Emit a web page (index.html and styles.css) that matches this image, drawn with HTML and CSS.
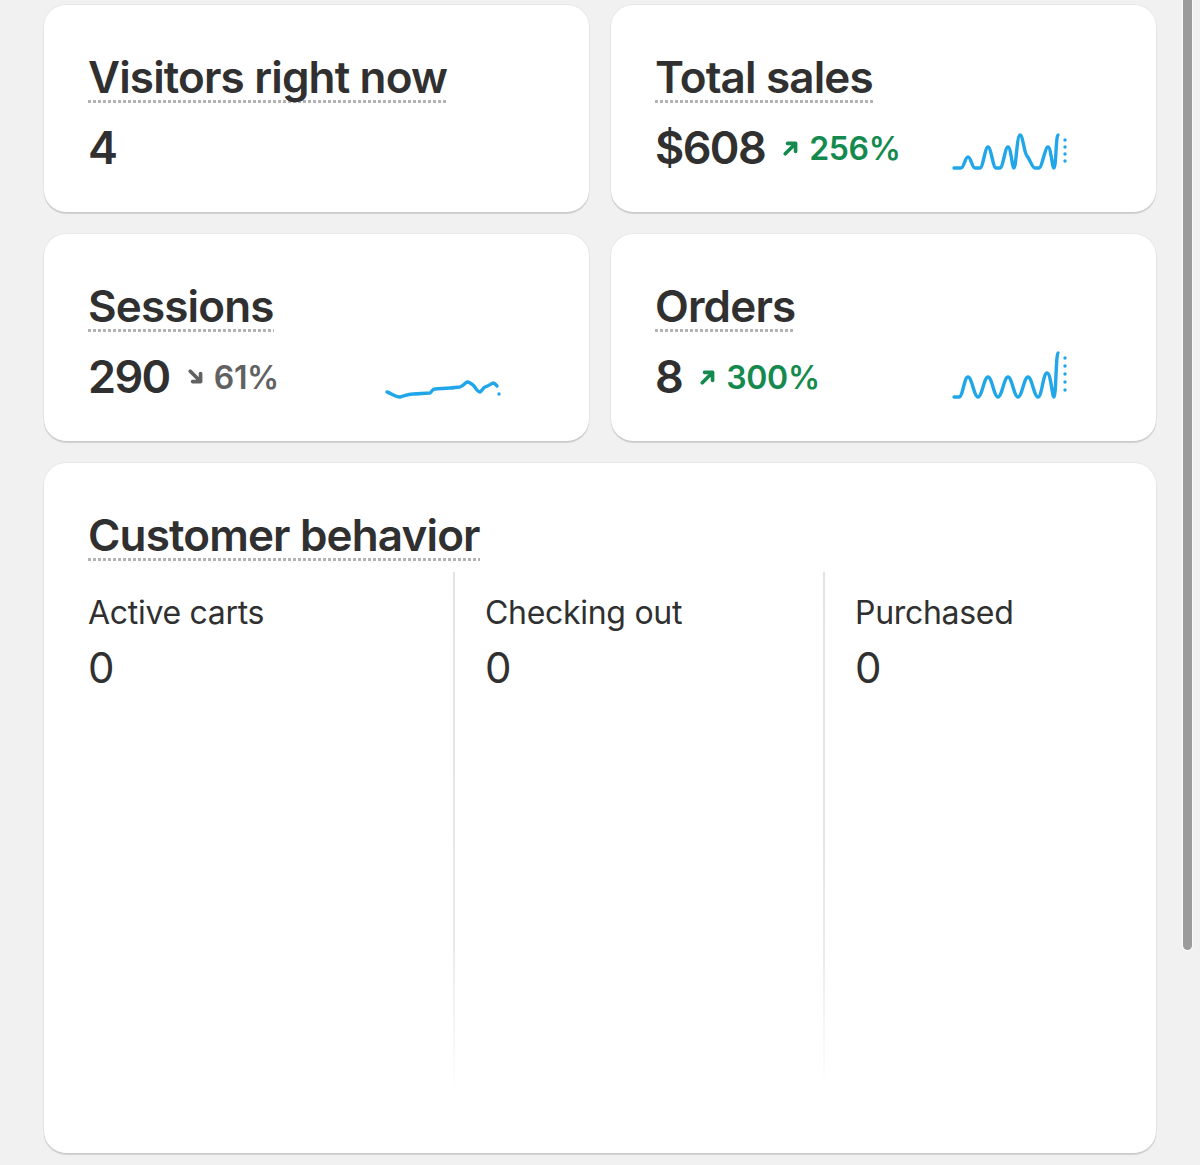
FILE: index.html
```html
<!DOCTYPE html>
<html lang="en">
<head>
<meta charset="utf-8">
<title>Live view</title>
<link rel="stylesheet" href="styles.css">
</head>
<body>
<main class="page">
  <section class="metric-grid">
    <article class="card metric">
      <h2 class="metric-title"><span class="dotted">Visitors right now</span></h2>
      <div class="metric-row">
        <div class="metric-value"><span class="value">4</span></div>
      </div>
    </article>

    <article class="card metric">
      <h2 class="metric-title"><span class="dotted">Total sales</span></h2>
      <div class="metric-row">
        <div class="metric-value">
          <span class="value">$608</span>
          <span class="delta up">
            <svg class="arrow" viewBox="0 0 14 14"><path d="M2 12 L11 3 M4 3 H11 V10"/></svg>
            256%
          </span>
        </div>
        <svg class="spark" viewBox="0 0 120 56">
          <path d="M1 48 H8 C11 48 12 37 15 37 C18 37 19 48 22 48 H27 C30 48 32 27 35 27 C38 27 40 48 43 48 H47 C50 48 52 27 55 27 C58 27 59 48 61 48 C63 48 64 15 67 15 C70 15 71 33 74 36 C77 39 79 48 82 48 H86 C89 48 92 27 95 27 C98 27 99 48 101 48 C103 48 103 15 105 15"/>
          <g class="dots"><circle cx="112" cy="20" r="1.7"/><circle cx="112" cy="27" r="1.7"/><circle cx="112" cy="34" r="1.7"/><circle cx="112" cy="41" r="1.7"/></g>
        </svg>
      </div>
    </article>

    <article class="card metric">
      <h2 class="metric-title"><span class="dotted">Sessions</span></h2>
      <div class="metric-row">
        <div class="metric-value">
          <span class="value">290</span>
          <span class="delta down">
            <svg class="arrow" viewBox="0 0 14 14"><path d="M2 2 L11 11 M11 4 V11 H4"/></svg>
            61%
          </span>
        </div>
        <svg class="spark" viewBox="0 0 120 56">
          <path d="M1 43 C5 44 9 48 14 48 C18 47 22 45 27 45 C33 45 38 44 44 44 C46 43 46 40 49 40 C54 40 58 39 64 39 C68 39 70 38 74 38 C77 37 79 34 81 33 C84 33 86 35 88 37 C90 40 92 43 94 43 C96 42 97 39 99 38 C102 37 105 35 107 34 C109 34 110 36 111 37"/>
          <g class="dots"><circle cx="113" cy="45" r="1.7"/></g>
        </svg>
      </div>
    </article>

    <article class="card metric">
      <h2 class="metric-title"><span class="dotted">Orders</span></h2>
      <div class="metric-row">
        <div class="metric-value">
          <span class="value">8</span>
          <span class="delta up">
            <svg class="arrow" viewBox="0 0 14 14"><path d="M2 12 L11 3 M4 3 H11 V10"/></svg>
            300%
          </span>
        </div>
        <svg class="spark" viewBox="0 0 120 56">
          <path d="M1 48 H6 C10 48 11 28 15 28 C19 28 21 48 25 48 C29 48 31 28 35 28 C39 28 41 48 45 48 C49 48 51 28 55 28 C59 28 61 48 65 48 C69 48 71 28 75 28 C79 28 81 48 85 48 C89 48 90 24 94 24 C98 24 99 48 101 48 C103 48 103 4 105 4"/>
          <g class="dots"><circle cx="112" cy="9" r="1.7"/><circle cx="112" cy="17" r="1.7"/><circle cx="112" cy="25" r="1.7"/><circle cx="112" cy="33" r="1.7"/><circle cx="112" cy="41" r="1.7"/></g>
        </svg>
      </div>
    </article>
  </section>

  <article class="card behavior">
    <h2 class="metric-title"><span class="dotted">Customer behavior</span></h2>
    <div class="stages">
      <div class="stage">
        <div class="stage-label">Active carts</div>
        <div class="stage-value">0</div>
      </div>
      <div class="stage">
        <div class="stage-label">Checking out</div>
        <div class="stage-value">0</div>
      </div>
      <div class="stage">
        <div class="stage-label">Purchased</div>
        <div class="stage-value">0</div>
      </div>
    </div>
  </article>
</main>
<div class="scroll-thumb"></div>
</body>
</html>
```

FILE: styles.css
```css
* {
  box-sizing: border-box;
}

html, body {
  margin: 0;
  height: 100%;
}

body {
  background: #f1f1f1;
  color: #303030;
  font-family: Inter, "Noto Sans", sans-serif;
  overflow: hidden;
}

.page {
  padding: 5px 44px 0 44px;
  display: flex;
  flex-direction: column;
  gap: 22px;
}

.metric-grid {
  display: grid;
  grid-template-columns: 1fr 1fr;
  gap: 22px;
}

.card {
  background: #ffffff;
  border-radius: 22px;
  box-shadow: 0 0 0 1px rgba(0, 0, 0, 0.035), 0 2px 1px rgba(0, 0, 0, 0.13);
}

.metric {
  height: 207px;
  padding: 46px 44px 36px 44px;
  display: flex;
  flex-direction: column;
}

.metric-title {
  margin: 0;
  font-size: 44px;
  line-height: 52px;
  font-weight: 600;
  letter-spacing: -0.85px;
}

.dotted {
  display: inline-block;
  background-image: linear-gradient(to right, #b3b3b3 60%, transparent 60%);
  background-size: 5px 3px;
  background-repeat: repeat-x;
  background-position: left bottom;
}

.metric-row {
  margin-top: 17px;
  display: grid;
  grid-template-columns: 298px 120px;
  align-items: start;
}

.metric-value {
  display: flex;
  align-items: center;
  height: 56px;
}

.value {
  font-size: 45px;
  line-height: 56px;
  font-weight: 600;
  letter-spacing: -1.6px;
}

.delta {
  display: inline-flex;
  align-items: center;
  margin-left: 18px;
  font-size: 32px;
  font-weight: 600;
  letter-spacing: -0.3px;
}

.delta.up {
  color: #148a4f;
}

.delta.down {
  color: #616161;
}

.arrow {
  width: 16px;
  height: 16px;
  margin-right: 10px;
  fill: none;
  stroke: currentColor;
  stroke-width: 3.2;
  stroke-linecap: round;
  stroke-linejoin: round;
}

.spark {
  width: 120px;
  height: 56px;
  overflow: visible;
}

.spark path {
  fill: none;
  stroke: #22a6ea;
  stroke-width: 3.4;
  stroke-linecap: round;
  stroke-linejoin: round;
}

.spark .dots {
  fill: #22a6ea;
}

.behavior {
  height: 690px;
  padding: 46px 44px 60px 44px;
  display: flex;
  flex-direction: column;
}

.stages {
  flex: 1;
  margin-top: 11px;
  display: grid;
  grid-template-columns: 365px 370px 1fr;
}

.stage {
  padding-top: 21px;
}

.stage + .stage {
  padding-left: 32px;
  background-image: linear-gradient(to bottom, #e3e3e3 0%, #e9e9e9 70%, rgba(240, 240, 240, 0) 100%);
  background-size: 2px 100%;
  background-repeat: no-repeat;
  background-position: left top;
}

.stage-label {
  font-size: 32px;
  line-height: 40px;
  font-weight: 400;
  letter-spacing: -0.3px;
}

.stage-value {
  margin-top: 9px;
  font-size: 42px;
  line-height: 52px;
  font-weight: 400;
}

.scroll-thumb {
  position: fixed;
  top: -20px;
  left: 1183px;
  width: 9px;
  height: 970px;
  border-radius: 5px;
  background: #9b9b9b;
  box-shadow: 0 0 0 1px rgba(255, 255, 255, 0.7);
}
```
